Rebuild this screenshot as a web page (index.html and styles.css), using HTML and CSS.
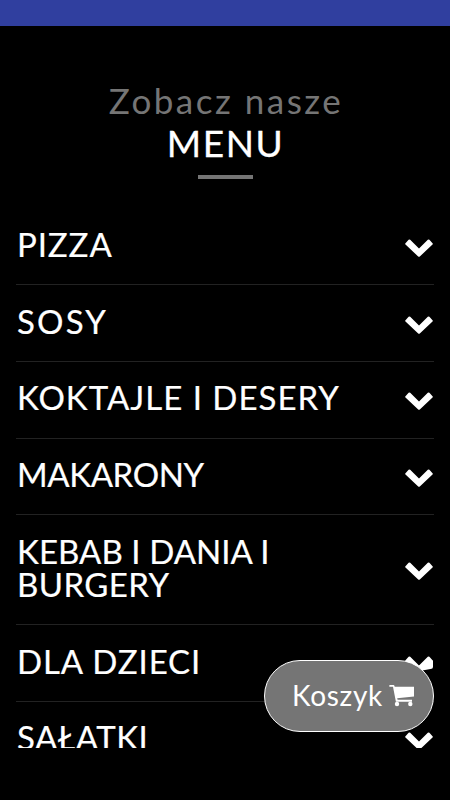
FILE: index.html
```html
<!DOCTYPE html>
<html lang="pl">
<head>
    <meta charset="UTF-8">
    <meta name="viewport" content="width=device-width, initial-scale=1.0">
    <title>Menu</title>
    <link rel="stylesheet" href="styles.css">
</head>
<body>
<svg class="sprite">
    <symbol id="chevron" viewBox="0 0 28 18">
        <path d="M.5 4.2 3.6 .8Q4.4 0 5.2 .8L14 9.4 22.8 .8Q23.6 0 24.4 .8L27.5 4.2Q28.2 4.9 27.5 5.6L14.8 17.5Q14 18.2 13.2 17.5L.5 5.6Q-.2 4.9 .5 4.2Z"/>
    </symbol>
</svg>
<header class="topbar"></header>
<main class="page">
    <div class="heading">
        <p class="subtitle">Zobacz nasze</p>
        <h2 class="title">MENU</h2>
        <span class="line"></span>
    </div>
    <ul class="menu">
        <li class="item"><span class="name pizza">PIZZA</span><svg class="arrow"><use href="#chevron"/></svg></li>
        <li class="item"><span class="name sosy">SOSY</span><svg class="arrow"><use href="#chevron"/></svg></li>
        <li class="item"><span class="name koktajle">KOKTAJLE I DESERY</span><svg class="arrow"><use href="#chevron"/></svg></li>
        <li class="item"><span class="name makarony">MAKARONY</span><svg class="arrow"><use href="#chevron"/></svg></li>
        <li class="item"><span class="name"><span class="kebab">KEBAB I DANIA I</span><br><span class="burgery">BURGERY</span></span><svg class="arrow"><use href="#chevron"/></svg></li>
        <li class="item"><span class="name dzieci">DLA DZIECI</span><svg class="arrow"><use href="#chevron"/><path d="M14 9.4Q20 9 22 6.5L28 4.5V11Q28 12.8 25.5 13L20 14 14 15Z"/></svg></li>
        <li class="item"><span class="name salatki">SAŁATKI</span><svg class="arrow"><use href="#chevron"/></svg></li>
    </ul>
</main>
<button class="cart">
    <span class="cart-label">Koszyk</span>
    <svg class="cart-icon" viewBox="0 0 25 22">
        <path d="M.7 0H4.6Q5.5 0 5.7 1.7H25V11.6L8.2 13.2 8.6 14.8H23V16.8H6.9L4 1.8H.7Q-.3 .9 .7 0Z"/>
        <circle cx="8" cy="19" r="2.2"/>
        <circle cx="21.3" cy="19" r="2.2"/>
    </svg>
</button>
</body>
</html>
```

FILE: styles.css
```css
* {
    box-sizing: border-box;
}

body {
    margin: 0;
    height: 100vh;
    overflow: hidden;
    background-color: #000;
    color: #fff;
    font-family: Lato, "Open Sans", sans-serif;
}

.sprite {
    display: none;
}

.topbar {
    height: 26px;
    background-color: #303f9f;
}

.page {
    height: 722px;
    padding: 53px 16px 0;
    overflow: hidden;
}

.heading {
    display: flex;
    flex-direction: column;
    align-items: center;
    height: 129.5px;
}

.subtitle {
    margin: 0;
    font-size: 35px;
    font-weight: 400;
    line-height: 42px;
    letter-spacing: 2.5px;
    text-indent: 2px;
    color: #757575;
}

.title {
    margin: 0;
    font-size: 37px;
    font-weight: 400;
    line-height: 44px;
    letter-spacing: 1.6px;
    text-indent: 1px;
    -webkit-text-stroke: .3px #fff;
}

.line {
    width: 55px;
    height: 4px;
    margin-top: 10px;
    background-color: #757575;
}

.menu {
    margin: 0;
    padding: 0;
    list-style: none;
}

.item {
    display: flex;
    align-items: center;
    justify-content: space-between;
    padding: 21.6px 1px 21.1px 0;
    border-bottom: 1px solid #222;
}

.name {
    margin: -2px 0 2px 1px;
    font-size: 33px;
    line-height: 33px;
    white-space: nowrap;
    -webkit-text-stroke: .2px #fff;
}

.pizza {
    letter-spacing: .9px;
}

.sosy {
    letter-spacing: 2.2px;
}

.koktajle {
    letter-spacing: 1px;
}

.makarony {
    letter-spacing: -.4px;
}

.kebab {
    letter-spacing: .05px;
}

.burgery {
    letter-spacing: .4px;
}

.dzieci {
    letter-spacing: .9px;
}

.salatki {
    letter-spacing: .5px;
}

.arrow {
    flex: none;
    width: 28px;
    height: 18px;
    margin-top: 3px;
    fill: #fff;
}

.cart {
    position: fixed;
    right: 16px;
    bottom: 68px;
    display: flex;
    align-items: center;
    width: 170px;
    height: 72px;
    padding: 0 19px 0 27px;
    justify-content: space-between;
    border: 1px solid #fff;
    border-radius: 36px;
    background-color: #757575;
    color: #fff;
    font-family: inherit;
}

.cart-label {
    margin-top: -3px;
    font-size: 28px;
    line-height: 32px;
    letter-spacing: .7px;
    white-space: nowrap;
}

.cart-icon {
    flex: none;
    width: 25px;
    height: 22px;
    fill: #fff;
}
```
